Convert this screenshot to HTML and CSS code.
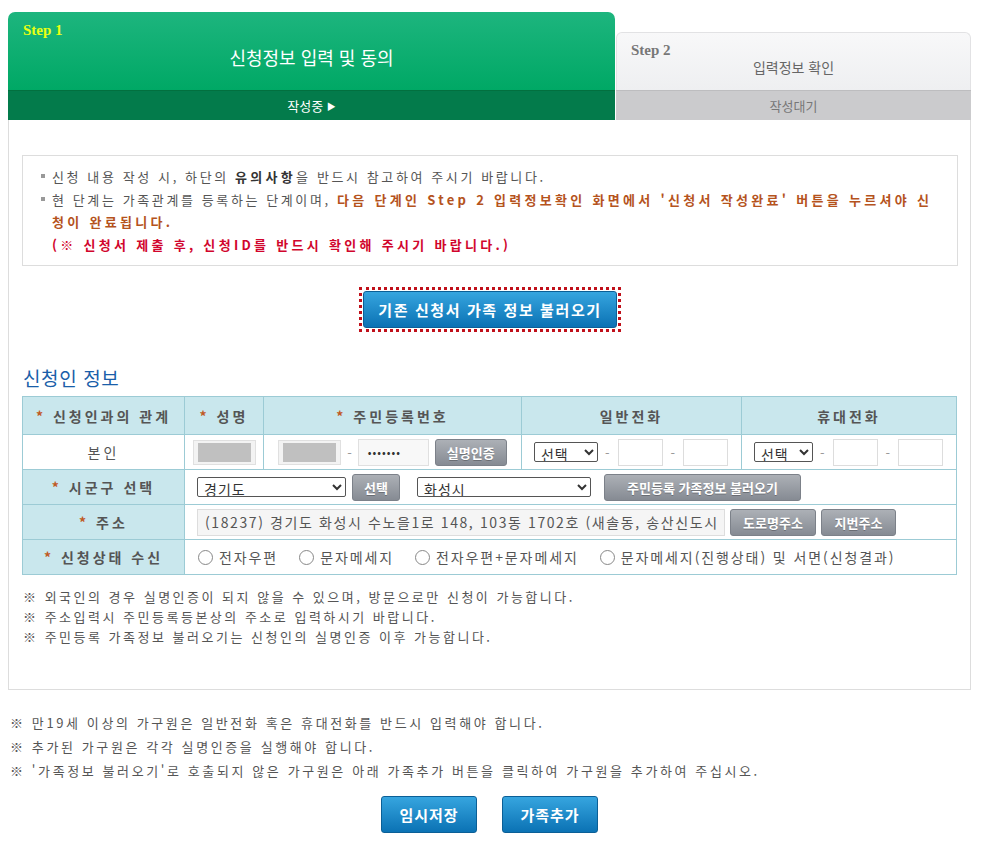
FILE: index.html
```html
<!DOCTYPE html>
<html lang="ko">
<head>
    <meta charset="UTF-8">
    <title>신청정보 입력 및 동의</title>
    <link rel="stylesheet" href="styles.css">
</head>
<body>
    <div class="page">
        <div class="steps">
            <div class="step step-on">
                <div class="step-head">
                    <span class="step-no">Step 1</span>
                    <span class="step-title">신청정보 입력 및 동의</span>
                </div>
                <div class="step-state">작성중 <span class="arrow">&#9654;</span></div>
            </div>
            <div class="step step-off">
                <div class="step-head">
                    <span class="step-no">Step 2</span>
                    <span class="step-title">입력정보 확인</span>
                </div>
                <div class="step-state">작성대기</div>
            </div>
        </div>

        <div class="content">
            <div class="notice">
                <p class="bullet">신청 내용 작성 시, 하단의 <b class="dark">유의사항</b>을 반드시 참고하여 주시기 바랍니다.</p>
                <p class="bullet">현 단계는 가족관계를 등록하는 단계이며, <b class="brown">다음 단계인 Step 2 입력정보확인 화면에서 '신청서 작성완료' 버튼을 누르셔야 신<br>청이 완료됩니다.</b><br><b class="red">(※ 신청서 제출 후, 신청ID를 반드시 확인해 주시기 바랍니다.)</b></p>
            </div>

            <div class="load-area">
                <span class="focus-ring"><button class="btn-blue btn-load">기존 신청서 가족 정보 불러오기</button></span>
            </div>

            <h3 class="section-title">신청인 정보</h3>

            <table class="form-table">
                <colgroup>
                    <col style="width: 162px">
                    <col style="width: 79px">
                    <col style="width: 258px">
                    <col style="width: 220px">
                    <col style="width: 215px">
                </colgroup>
                <tr>
                    <th><span class="star">*</span> 신청인과의 관계</th>
                    <th><span class="star">*</span> 성명</th>
                    <th><span class="star">*</span> 주민등록번호</th>
                    <th>일반전화</th>
                    <th>휴대전화</th>
                </tr>
                <tr>
                    <td class="center">본인</td>
                    <td>
                        <div class="field">
                            <span class="mask"><span></span></span>
                        </div>
                    </td>
                    <td>
                        <div class="field">
                            <span class="mask"><span></span></span>
                            <span class="dash">-</span>
                            <span class="pw">&bull;&bull;&bull;&bull;&bull;&bull;&bull;</span>
                            <button class="btn-gray btn-auth">실명인증</button>
                        </div>
                    </td>
                    <td>
                        <div class="field">
                            <select class="sel sel-tel"><option>선택</option></select>
                            <span class="dash">-</span>
                            <input class="txt txt-tel" type="text">
                            <span class="dash">-</span>
                            <input class="txt txt-tel" type="text">
                        </div>
                    </td>
                    <td>
                        <div class="field">
                            <select class="sel sel-hp"><option>선택</option></select>
                            <span class="dash">-</span>
                            <input class="txt txt-tel" type="text">
                            <span class="dash">-</span>
                            <input class="txt txt-tel" type="text">
                        </div>
                    </td>
                </tr>
                <tr>
                    <th><span class="star">*</span> 시군구 선택</th>
                    <td colspan="4">
                        <div class="field left">
                            <select class="sel sel-sido"><option>경기도</option></select>
                            <button class="btn-gray btn-pick">선택</button>
                            <select class="sel sel-sigungu"><option>화성시</option></select>
                            <button class="btn-gray btn-family">주민등록 가족정보 불러오기</button>
                        </div>
                    </td>
                </tr>
                <tr>
                    <th><span class="star">*</span> 주소</th>
                    <td colspan="4">
                        <div class="field left">
                            <input class="txt txt-addr" type="text" readonly value="(18237) 경기도 화성시 수노을1로 148, 103동 1702호 (새솔동, 송산신도시)">
                            <button class="btn-gray btn-road">도로명주소</button>
                            <button class="btn-gray btn-jibun">지번주소</button>
                        </div>
                    </td>
                </tr>
                <tr>
                    <th><span class="star">*</span> 신청상태 수신</th>
                    <td colspan="4">
                        <div class="field left radios">
                            <label class="radio"><input type="radio" name="recv"> 전자우편</label>
                            <label class="radio"><input type="radio" name="recv"> 문자메세지</label>
                            <label class="radio"><input type="radio" name="recv"> 전자우편+문자메세지</label>
                            <label class="radio"><input type="radio" name="recv"> 문자메세지(진행상태) 및 서면(신청결과)</label>
                        </div>
                    </td>
                </tr>
            </table>

            <ul class="notes">
                <li>※ 외국인의 경우 실명인증이 되지 않을 수 있으며, 방문으로만 신청이 가능합니다.</li>
                <li>※ 주소입력시 주민등록등본상의 주소로 입력하시기 바랍니다.</li>
                <li>※ 주민등록 가족정보 불러오기는 신청인의 실명인증 이후 가능합니다.</li>
            </ul>
        </div>

        <ul class="notes notes-bottom">
            <li>※ 만19세 이상의 가구원은 일반전화 혹은 휴대전화를 반드시 입력해야 합니다.</li>
            <li>※ 추가된 가구원은 각각 실명인증을 실행해야 합니다.</li>
            <li>※ '가족정보 불러오기'로 호출되지 않은 가구원은 아래 가족추가 버튼을 클릭하여 가구원을 추가하여 주십시오.</li>
        </ul>

        <div class="actions">
            <button class="btn-blue btn-act">임시저장</button>
            <button class="btn-blue btn-act">가족추가</button>
        </div>
    </div>
</body>
</html>
```

FILE: styles.css
```css
body {
    margin: 0;
    font-family: 'Noto Sans CJK KR', 'Noto Sans', sans-serif;
    font-size: 13px;
    color: #555;
    background: #fff;
}

.page {
    width: 963px;
    margin-left: 8px;
    padding-top: 12px;
}

/* step tabs */
.steps {
    display: flex;
    align-items: flex-end;
}

.step {
    display: flex;
    flex-direction: column;
}

.step-on {
    width: 607px;
}

.step-off {
    width: 355px;
    margin-left: 1px;
}

.step-head {
    position: relative;
    text-align: center;
}

.step-on .step-head {
    height: 78px;
    background: linear-gradient(#1db57e, #00a865);
    border-radius: 7px 7px 0 0;
}

.step-off .step-head {
    height: 57px;
    background: linear-gradient(#f8f8f9, #eeeff1);
    border: 1px solid #e2e2e4;
    border-bottom: none;
    border-radius: 6px 6px 0 0;
}

.step-no {
    position: absolute;
    left: 15px;
    font-family: 'Liberation Serif', serif;
    font-weight: bold;
    font-size: 15px;
}

.step-on .step-no {
    top: 10px;
    color: #eaff12;
}

.step-off .step-no {
    top: 9px;
    left: 14px;
    color: #777;
}

.step-title {
    display: block;
}

.step-on .step-title {
    padding-top: 32px;
    font-size: 18px;
    line-height: 26px;
    color: #fff;
}

.step-off .step-title {
    padding-top: 24px;
    font-size: 14px;
    line-height: 20px;
    color: #666;
}

.step-state {
    text-align: center;
    font-size: 13px;
}

.step-on .step-state {
    background: #037b4b;
    color: #fff;
    border-top: 1px solid #02703f;
    height: 29px;
    line-height: 29px;
}

.step-off .step-state {
    background: #cbcbcd;
    color: #777;
    border-top: 1px solid #bdbdbf;
    height: 29px;
    line-height: 29px;
}

.arrow {
    font-size: 9px;
    vertical-align: 1px;
}

/* content box */
.content {
    border: 1px solid #ddd;
    border-top: none;
    padding: 35px 12px 42px 13px;
}

.notice {
    border: 1px solid #ddd;
    padding: 10px 10px 9px 17px;
}

.notice p {
    margin: 0;
    line-height: 22.5px;
    letter-spacing: 2.6px;
}

.notice b {
    letter-spacing: 3.3px;
}

.bullet {
    position: relative;
    padding-left: 12px;
}

.bullet::before {
    content: "";
    position: absolute;
    left: 1px;
    top: 8px;
    width: 4px;
    height: 4px;
    background: #999;
}

.dark {
    color: #333;
}

.brown {
    color: #b5531d;
}

.red {
    color: #d1052c;
}

.load-area {
    text-align: center;
    padding-top: 21px;
}

.focus-ring {
    display: inline-block;
    border: 3px dotted #c0101a;
    padding: 1px;
}

.btn-blue {
    background: linear-gradient(#36a5df, #0b72b4);
    border: 1px solid #0b5f96;
    border-radius: 3px;
    color: #fff;
    font-family: 'Noto Sans CJK KR', sans-serif;
    font-weight: bold;
    cursor: pointer;
}

.btn-load {
    display: block;
    width: 254px;
    height: 37px;
    font-size: 15px;
    letter-spacing: 1.6px;
}

.section-title {
    margin: 33px 0 5px 1px;
    font-size: 19px;
    font-weight: normal;
    line-height: 26px;
    letter-spacing: 0.6px;
    color: #1a5ea9;
}

/* applicant table */
.form-table {
    width: 934px;
    border-collapse: collapse;
    table-layout: fixed;
}

.form-table th,
.form-table td {
    border: 1px solid #9ccbd5;
    height: 34px;
    padding: 0;
    font-size: 14px;
}

.form-table tr:first-child th {
    height: 37px;
}

.form-table th {
    background: #c9e7ed;
    color: #555;
    letter-spacing: 3px;
}

.star {
    color: #c05a24;
}

.center {
    text-align: center;
    letter-spacing: 3px;
}

.field {
    display: flex;
    align-items: center;
    justify-content: center;
    gap: 6px;
}

.field.left {
    justify-content: flex-start;
    padding-left: 12px;
}

.mask {
    display: block;
    width: 53px;
    height: 19px;
    padding: 2px 4px;
    background: #f3f3f3;
    border: 1px solid #e0e0e0;
}

.mask span {
    display: block;
    height: 100%;
    background: #c0c0c0;
}

.dash {
    color: #999;
    font-size: 13px;
}

.pw {
    display: block;
    width: 60px;
    height: 25px;
    line-height: 25px;
    padding-left: 9px;
    background: #f8f8f8;
    border: 1px solid #e0e0e0;
    font-size: 11px;
    letter-spacing: 1px;
    color: #333;
}

.btn-gray {
    height: 27px;
    padding: 0;
    background: linear-gradient(#acb0b6, #868b93);
    border: 1px solid #7c8189;
    border-radius: 3px;
    color: #fff;
    font-family: 'Noto Sans CJK KR', sans-serif;
    font-size: 13px;
    font-weight: bold;
    text-shadow: 0 1px 0 rgba(0, 0, 0, 0.25);
}

.btn-auth {
    width: 72px;
}

.btn-pick {
    width: 48px;
    margin-right: 11px;
}

.btn-family {
    width: 197px;
    margin-left: 7px;
}

.btn-road {
    width: 86px;
}

.btn-jibun {
    width: 75px;
}

.field .btn-road,
.field .btn-jibun {
    margin-left: -1px;
}

.sel {
    height: 20px;
    padding: 0 2px;
    border: 1px solid #555;
    border-radius: 2px;
    background: #fff;
    font-family: 'Noto Sans CJK KR', sans-serif;
    font-size: 14px;
    letter-spacing: 1px;
    color: #333;
}

.sel-tel {
    width: 64px;
}

.sel-hp {
    width: 59px;
}

.sel-sido {
    width: 149px;
}

.sel-sigungu {
    width: 174px;
}

.txt {
    box-sizing: border-box;
    height: 27px;
    border: 1px solid #ddd;
    font-family: 'Noto Sans CJK KR', sans-serif;
    font-size: 14px;
    color: #555;
}

.txt-tel {
    width: 45px;
}

.field .txt-tel + .dash,
.field .dash + .txt-tel,
.field .sel + .dash {
    margin: 0 1px;
}

.txt-addr {
    width: 528px;
    padding: 0 7px;
    background: #f5f5f5;
    letter-spacing: 1.6px;
}

.radios {
    gap: 0;
}

.radio {
    display: flex;
    align-items: center;
    letter-spacing: 1.9px;
    color: #555;
    margin-right: 20px;
}

.radio input {
    appearance: none;
    width: 15px;
    height: 15px;
    margin: 0 6px 0 1px;
    border: 1px solid #888;
    border-radius: 50%;
    background: #fff;
}

.notes {
    list-style: none;
    margin: 0;
    padding: 12px 0 0 1px;
}

.notes li {
    line-height: 20px;
    letter-spacing: 2.5px;
}

.notes-bottom {
    padding: 21px 0 0 2px;
}

.notes-bottom li {
    line-height: 24px;
    letter-spacing: 2.6px;
}

.actions {
    display: flex;
    justify-content: center;
    gap: 25px;
    padding-top: 13px;
}

.btn-act {
    width: 96px;
    height: 37px;
    font-size: 15px;
    letter-spacing: 1px;
}
```
